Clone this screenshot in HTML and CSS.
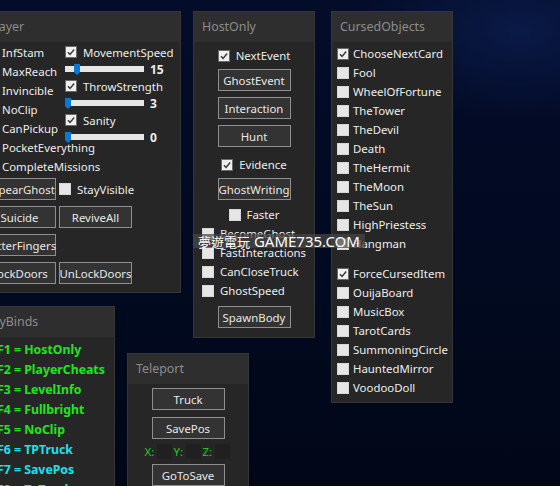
FILE: index.html
```html
<!DOCTYPE html>
<html>
<head>
<meta charset="utf-8">
<link rel="stylesheet" href="styles.css">
</head>
<body>

<section class="win player">
  <div class="win-title">Player</div>
  <div class="player-body">
    <div class="player-cols">
      <div class="col1">
        <div class="tg"><span class="cb"></span><span>InfStam</span></div>
        <div class="tg"><span class="cb"></span><span>MaxReach</span></div>
        <div class="tg"><span class="cb"></span><span>Invincible</span></div>
        <div class="tg"><span class="cb"></span><span>NoClip</span></div>
        <div class="tg"><span class="cb"></span><span>CanPickup</span></div>
        <div class="tg"><span class="cb"></span><span>PocketEverything</span></div>
        <div class="tg"><span class="cb"></span><span>CompleteMissions</span></div>
      </div>
      <div class="col2">
        <div class="tg"><span class="cb on"><svg viewBox="0 0 12 12"><path d="M2.3 6.2 L4.9 8.8 L9.8 3"/></svg></span><span>MovementSpeed</span></div>
        <div class="slider-row"><div class="track"><svg class="thumb" style="left:9px" viewBox="0 0 6 11"><polygon points="0,0 6,0 6,8 3,11 0,8"/></svg></div><span class="val">15</span></div>
        <div class="tg"><span class="cb on"><svg viewBox="0 0 12 12"><path d="M2.3 6.2 L4.9 8.8 L9.8 3"/></svg></span><span>ThrowStrength</span></div>
        <div class="slider-row"><div class="track"><svg class="thumb" style="left:0px" viewBox="0 0 6 11"><polygon points="0,0 6,0 6,8 3,11 0,8"/></svg></div><span class="val">3</span></div>
        <div class="tg"><span class="cb on"><svg viewBox="0 0 12 12"><path d="M2.3 6.2 L4.9 8.8 L9.8 3"/></svg></span><span>Sanity</span></div>
        <div class="slider-row"><div class="track"><svg class="thumb" style="left:0px" viewBox="0 0 6 11"><polygon points="0,0 6,0 6,8 3,11 0,8"/></svg></div><span class="val">0</span></div>
      </div>
    </div>
    <div class="btn-rows">
      <div class="brow"><div class="btn">AppearGhost</div><div class="tg tg-btn"><span class="cb"></span><span>StayVisible</span></div></div>
      <div class="brow"><div class="btn">Suicide</div><div class="btn">ReviveAll</div></div>
      <div class="brow"><div class="btn">ButterFingers</div></div>
      <div class="brow"><div class="btn">LockDoors</div><div class="btn">UnLockDoors</div></div>
    </div>
  </div>
</section>

<section class="win keys">
  <div class="win-title">KeyBinds</div>
  <div class="keys-body">
    <div class="key green">F1 = HostOnly</div>
    <div class="key green">F2 = PlayerCheats</div>
    <div class="key green">F3 = LevelInfo</div>
    <div class="key green">F4 = Fullbright</div>
    <div class="key green">F5 = NoClip</div>
    <div class="key cyan">F6 = TPTruck</div>
    <div class="key cyan">F7 = SavePos</div>
    <div class="key cyan">F8 = ToTruck</div>
  </div>
</section>

<section class="win tp">
  <div class="win-title">Teleport</div>
  <div class="center-body">
    <div class="btn mt4">Truck</div>
    <div class="btn mt7">SavePos</div>
    <div class="coords">
      <span class="c-lbl">X:</span><span class="c-box"></span>
      <span class="c-lbl">Y:</span><span class="c-box"></span>
      <span class="c-lbl">Z:</span><span class="c-box"></span>
    </div>
    <div class="btn mt5">GoToSave</div>
  </div>
</section>

<section class="win host">
  <div class="win-title">HostOnly</div>
  <div class="center-body">
    <div class="tg mt4"><span class="cb on"><svg viewBox="0 0 12 12"><path d="M2.3 6.2 L4.9 8.8 L9.8 3"/></svg></span><span>NextEvent</span></div>
    <div class="btn mt4">GhostEvent</div>
    <div class="btn mt6">Interaction</div>
    <div class="btn mt6">Hunt</div>
    <div class="tg mt8"><span class="cb on"><svg viewBox="0 0 12 12"><path d="M2.3 6.2 L4.9 8.8 L9.8 3"/></svg></span><span>Evidence</span></div>
    <div class="btn mt4">GhostWriting</div>
    <div class="tg mt5 faster"><span class="cb"></span><span>Faster</span></div>
    <div class="tg-group">
      <div class="tg"><span class="cb"></span><span>BecomeGhost</span></div>
      <div class="tg"><span class="cb"></span><span>FastInteractions</span></div>
      <div class="tg"><span class="cb"></span><span>CanCloseTruck</span></div>
      <div class="tg"><span class="cb"></span><span>GhostSpeed</span></div>
    </div>
    <div class="btn mt6">SpawnBody</div>
  </div>
</section>

<section class="win cursed">
  <div class="win-title">CursedObjects</div>
  <div class="cursed-body">
    <div class="tg"><span class="cb on"><svg viewBox="0 0 12 12"><path d="M2.3 6.2 L4.9 8.8 L9.8 3"/></svg></span><span>ChooseNextCard</span></div>
    <div class="tg"><span class="cb"></span><span>Fool</span></div>
    <div class="tg"><span class="cb"></span><span>WheelOfFortune</span></div>
    <div class="tg"><span class="cb"></span><span>TheTower</span></div>
    <div class="tg"><span class="cb"></span><span>TheDevil</span></div>
    <div class="tg"><span class="cb"></span><span>Death</span></div>
    <div class="tg"><span class="cb"></span><span>TheHermit</span></div>
    <div class="tg"><span class="cb"></span><span>TheMoon</span></div>
    <div class="tg"><span class="cb"></span><span>TheSun</span></div>
    <div class="tg"><span class="cb"></span><span>HighPriestess</span></div>
    <div class="tg"><span class="cb"></span><span>Hangman</span></div>
    <div class="spacer"></div>
    <div class="tg"><span class="cb on"><svg viewBox="0 0 12 12"><path d="M2.3 6.2 L4.9 8.8 L9.8 3"/></svg></span><span>ForceCursedItem</span></div>
    <div class="tg"><span class="cb"></span><span>OuijaBoard</span></div>
    <div class="tg"><span class="cb"></span><span>MusicBox</span></div>
    <div class="tg"><span class="cb"></span><span>TarotCards</span></div>
    <div class="tg"><span class="cb"></span><span>SummoningCircle</span></div>
    <div class="tg"><span class="cb"></span><span>HauntedMirror</span></div>
    <div class="tg"><span class="cb"></span><span>VoodooDoll</span></div>
  </div>
</section>

<div class="wm"><span class="cjk">夢遊電玩</span> GAME735.COM</div>

</body>
</html>
```

FILE: styles.css
```css
* { box-sizing: border-box; }
html, body { margin: 0; padding: 0; }
body {
  width: 560px;
  height: 486px;
  overflow: hidden;
  position: relative;
  font-family: "Noto Sans", "Open Sans", sans-serif;
  font-size: 11.4px;
  color: #ededed;
  background:
    radial-gradient(ellipse 170px 90px at 520px 30px, rgba(12, 30, 80, 0.75) 0%, rgba(12, 30, 80, 0) 100%),
    linear-gradient(180deg, #030c29 0%, #020a22 50%, #010717 100%);
}

.win {
  position: absolute;
  background: #262626;
  border: 1px solid #363636;
}
.win-title {
  height: 30px;
  line-height: 30px;
  padding-left: 8px;
  background: #2e2e2e;
  color: #8c8c8c;
  font-size: 12.4px;
  white-space: nowrap;
}

/* toggles */
.tg {
  display: flex;
  align-items: center;
  gap: 5px;
  height: 19px;
  white-space: nowrap;
}
.cb {
  width: 12px;
  height: 12px;
  flex: none;
  background: #e6e6e6;
  border: 1px solid #d6d6d6;
  display: flex;
}
.cb.on {
  border-color: #6a6a6a;
  background: #f0f0f0;
}
.cb svg { width: 10px; height: 10px; }
.cb svg path {
  fill: none;
  stroke: #3a3a3a;
  stroke-width: 1.7;
}

/* buttons */
.btn {
  width: 73px;
  height: 22px;
  flex: none;
  border: 1px solid #8e8e8e;
  background: #333333;
  color: #e8e8e8;
  display: flex;
  align-items: center;
  justify-content: center;
  white-space: nowrap;
}
.mt4 { margin-top: 4px; }
.mt5 { margin-top: 5px; }
.mt6 { margin-top: 6px; }
.mt7 { margin-top: 7px; }
.mt8 { margin-top: 8px; }

/* player window */
.player { left: -21px; top: 11px; width: 202px; height: 282px; }
.player-body { padding: 1px 0 0 5px; }
.player-cols { display: flex; }
.col1 { width: 80px; display: flex; flex-direction: column; }
.col2 { display: flex; flex-direction: column; }
.col2 .tg { height: 18px; gap: 6px; }
.slider-row {
  height: 16px;
  display: flex;
  align-items: center;
}
.track {
  position: relative;
  width: 79px;
  height: 6px;
  background: #e6e6e6;
}
.thumb {
  position: absolute;
  top: -2px;
  width: 6px;
  height: 11px;
  fill: #0a78d7;
}
.val { margin-left: 6px; font-weight: 700; font-size: 12px; }
.btn-rows {
  margin: 2px 0 0 -2px;
  display: flex;
  flex-direction: column;
  gap: 6px;
}
.brow { display: flex; gap: 3px; align-items: center; height: 22px; }
.tg-btn { gap: 6px; }

/* keybinds */
.keys { left: -24px; top: 306px; width: 139px; height: 200px; }
.keys-body { padding: 3px 0 0 20px; }
.key {
  height: 20px;
  line-height: 20px;
  font-weight: 700;
  font-size: 12.3px;
  white-space: nowrap;
}
.green { color: #1ee61e; }
.cyan { color: #1fe0ee; }

/* centered windows */
.center-body {
  display: flex;
  flex-direction: column;
  align-items: center;
}
.center-body .tg { gap: 6px; }
.tg-group {
  display: flex;
  flex-direction: column;
  align-items: flex-start;
}
.host { left: 193px; top: 11px; width: 122px; height: 327px; }
.tp { left: 127px; top: 353px; width: 122px; height: 160px; }

.coords {
  margin-top: 5px;
  height: 15px;
  display: flex;
  align-items: center;
  color: #22c822;
}
.c-lbl { width: 12px; line-height: 15px; }
.c-box {
  width: 15px;
  height: 15px;
  margin-right: 2px;
  background: #202020;
}

/* cursed objects */
.cursed { left: 331px; top: 11px; width: 122px; height: 392px; }
.cursed-body { padding: 2px 0 0 5px; }
.cursed-body .tg { gap: 4px; }
.spacer { height: 11px; }

/* watermark overlay */
.wm {
  position: absolute;
  left: 193px;
  top: 234px;
  width: 172px;
  height: 14px;
  padding-left: 5px;
  background: rgba(70, 70, 70, 0.72);
  color: #ffffff;
  font-family: "Noto Sans", "Noto Sans CJK TC", sans-serif;
  font-size: 15px;
  line-height: 14px;
  white-space: nowrap;
}
.wm .cjk { font-family: "Noto Sans CJK TC", sans-serif; font-size: 13px; }
```
